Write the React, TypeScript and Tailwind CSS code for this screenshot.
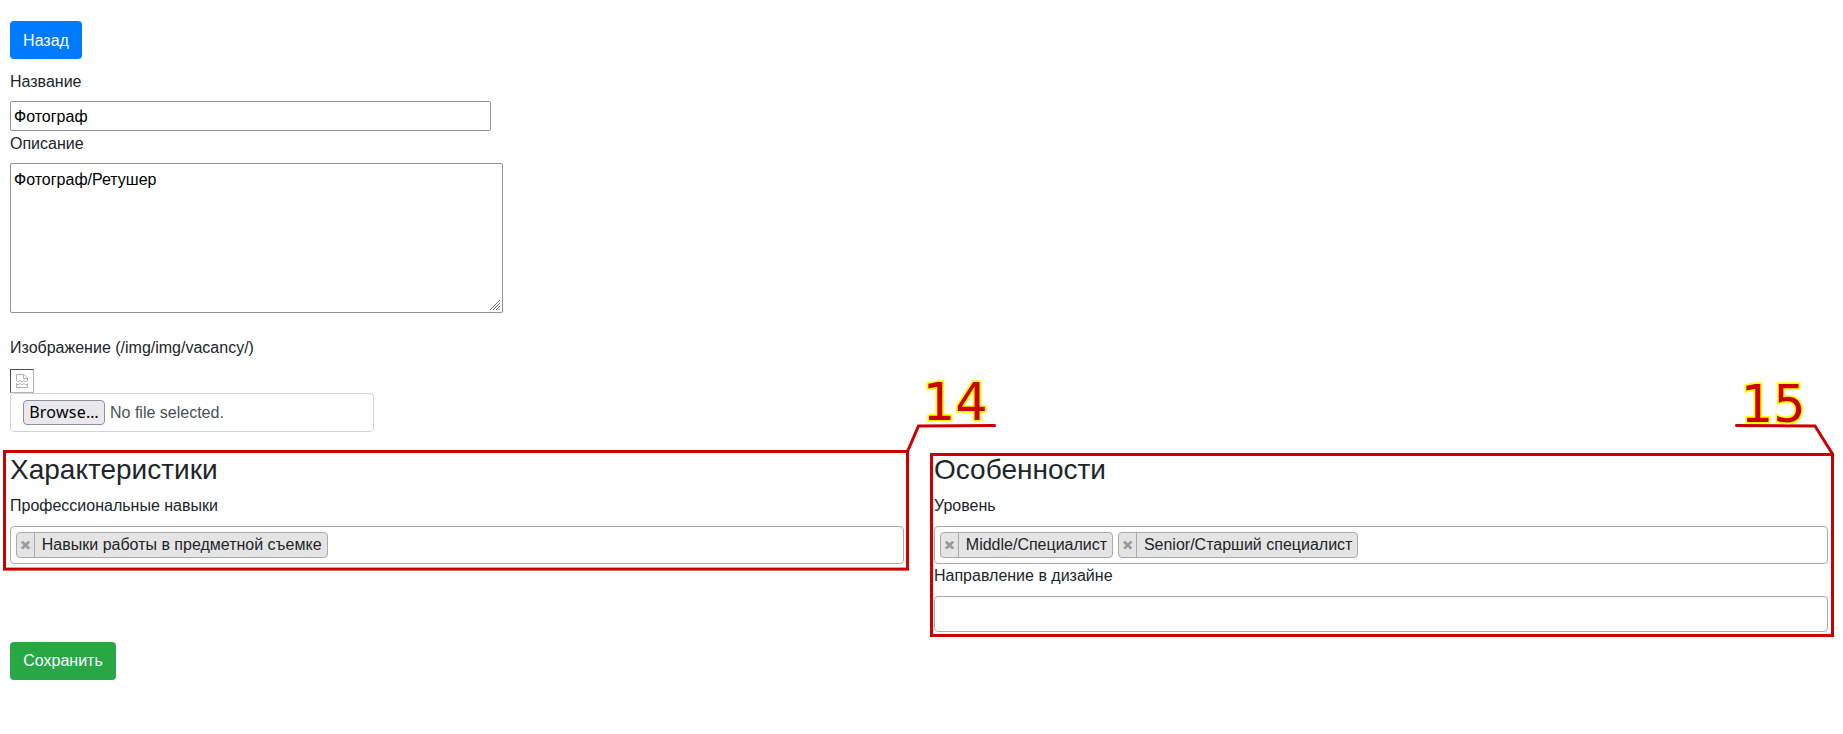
import React from "react";

function Label({ children, shift = "pt-0" }: { children: React.ReactNode; shift?: string }) {
  return <label className={`mb-2 block h-6 leading-6 ${shift}`}>{children}</label>;
}

function Tag({ children }: { children: React.ReactNode }) {
  return (
    <li className="flex h-[26px] items-stretch rounded border border-[#aaa] bg-[#e4e4e4]">
      <button className="w-[18px] border-r border-[#aaa] pb-px font-['DejaVu_Sans',sans-serif] text-[13px] leading-[23px] font-bold text-[#999] [-webkit-text-stroke:1px_#999]">×</button>
      <span className="pr-[5px] pl-[6.8px] leading-6">{children}</span>
    </li>
  );
}

function TagSelect({ tags, height }: { tags: string[]; height: string }) {
  return (
    <ul className={`flex items-start gap-[5px] rounded border border-[#aaa] bg-white px-[5px] pt-[5px] ${height}`}>
      {tags.map((t) => (
        <Tag key={t}>{t}</Tag>
      ))}
    </ul>
  );
}

function BrokenImage() {
  return (
    <div className="flex h-6 w-6 items-center justify-center border border-t-[#4b4b4b] border-r-[#b4b4b4] border-b-[#b4b4b4] border-l-[#4b4b4b]">
      <svg width="12" height="14" viewBox="0 0 12 14" fill="none" stroke="#b0b0b0" strokeWidth="1">
        <path d="M0.5 6V0.5H8L11.5 4V6M7.5 0.5V4.5H11.5" />
        <path d="M0 6L2 8L4 6.5L6 8L8 6.5L10 8L12 6" />
        <path d="M0.5 13.5V9.5L2 11L4 9.5L6 11L8 9.5L10 11L11.5 9.5V13.5Z" />
      </svg>
    </div>
  );
}

function Callouts() {
  return (
    <svg className="pointer-events-none absolute top-0 left-0" width="1843" height="734" fill="none" stroke="#cc0000" strokeWidth="3">
      <rect x="4.5" y="451.5" width="903" height="117.6" />
      <path d="M907.5 451.5L918.5 426L994.5 425.5" strokeLinecap="round" />
      <rect x="931.5" y="454.5" width="901" height="181" />
      <path d="M1736.5 425.5L1815 426L1832.5 454" strokeLinecap="round" />
      <g className="[font-family:'DejaVu_Sans',sans-serif] text-[51px]" fill="#cc0000" stroke="#ffff00" strokeWidth="3.5" paintOrder="stroke">
        <text x="922.8" y="420">14</text>
        <text x="1740.8" y="422">15</text>
      </g>
    </svg>
  );
}

export default function App() {
  return (
    <div className="relative h-[734px] w-[1843px] overflow-hidden bg-white pt-[21px] pl-[10px] font-['Liberation_Sans',Arial,sans-serif] text-base text-[#212529]">
      <button className="block h-[38px] w-[72px] rounded bg-[#007bff] pt-px text-white">Назад</button>

      <div className="mt-[10px]">
        <Label shift="pt-px">Название</Label>
        <input className="block h-[30px] w-[481px] rounded-[2px] border border-[#8f8f9d] px-[3px] pt-[2px] text-black" defaultValue="Фотограф" />
      </div>

      <Label shift="pt-px">Описание</Label>
      <div className="relative h-[150px] w-[493px]">
        <textarea className="block h-full w-full resize-none rounded-[2px] border border-[#8f8f9d] px-[3px] py-1 leading-6 text-black" defaultValue="Фотограф/Ретушер" />
        <svg className="absolute right-[3px] bottom-[3px]" width="10" height="10" stroke="#777" strokeWidth="1">
          <path d="M0 10L10 0M3 10L10 3M6 10L10 6M8.5 10L10 8.5" />
        </svg>
      </div>

      <div className="mt-[23px]">
        <Label>Изображение (/img/img/vacancy/)</Label>
        <div className="pt-px">
          <BrokenImage />
        </div>
        <div className="flex h-[39px] w-[364px] items-center rounded border border-[#ced4da] pl-3">
          <button className="h-[25px] w-[82px] rounded border border-[#8f8f9d] bg-[#e9e9ed] pb-px font-['Noto_Sans',sans-serif] leading-[21px] tracking-[0.25px] text-black">Browse…</button>
          <span className="ml-[5px] text-[#495057]">No file selected.</span>
        </div>
      </div>

      <div className="mt-[21px] flex gap-[30px]">
        <section className="w-[894px]">
          <h3 className="mb-2 text-[28px] leading-[33px]">Характеристики</h3>
          <Label>Профессиональные навыки</Label>
          <TagSelect tags={["Навыки работы в предметной съемке"]} height="h-[38px]" />
        </section>
        <section className="w-[894px]">
          <h3 className="mb-2 text-[28px] leading-[33px]">Особенности</h3>
          <Label>Уровень</Label>
          <TagSelect tags={["Middle/Специалист", "Senior/Старший специалист"]} height="h-[38px]" />
          <Label>Направление в дизайне</Label>
          <TagSelect tags={[]} height="h-[36px]" />
        </section>
      </div>

      <button className="mt-[10px] block h-[38px] w-[106px] rounded bg-[#28a745] text-white">Сохранить</button>
      <Callouts />
    </div>
  );
}
